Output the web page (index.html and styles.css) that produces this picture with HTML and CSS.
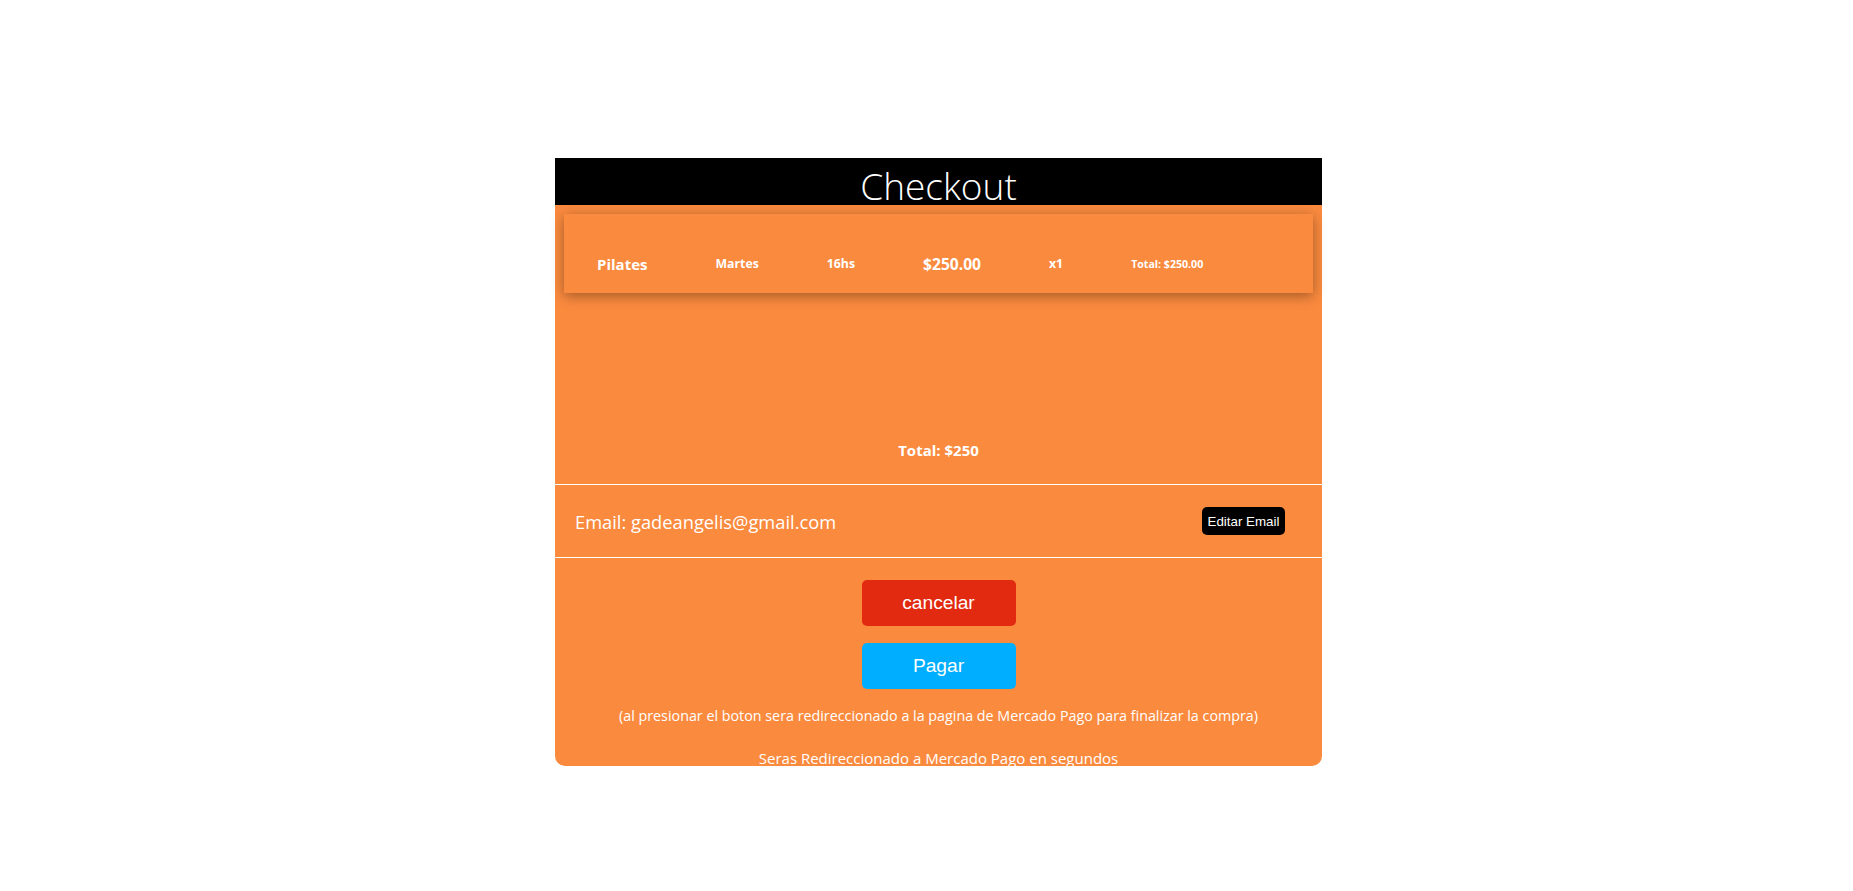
FILE: index.html
```html
<!DOCTYPE html>
<html lang="es">
<head>
<meta charset="utf-8">
<title>Checkout</title>
<link rel="stylesheet" href="styles.css">
</head>
<body>
<div class="page">
  <div class="card">
    <div class="card-header">
      <h1 class="title">Checkout</h1>
    </div>
    <div class="items">
      <div class="item">
        <span class="cell name">Pilates</span>
        <span class="cell sm">Martes</span>
        <span class="cell sm">16hs</span>
        <span class="cell md">$250.00</span>
        <span class="cell sm">x1</span>
        <span class="cell xs">Total: $250.00</span>
      </div>
      <div class="grand-total">Total: $250</div>
    </div>
    <div class="email-row">
      <span class="email">Email: gadeangelis@gmail.com</span>
      <button class="edit-btn">Editar Email</button>
    </div>
    <div class="actions">
      <button class="btn btn-cancel">cancelar</button>
      <button class="btn btn-pay">Pagar</button>
      <p class="note">(al presionar el boton sera redireccionado a la pagina de Mercado Pago para finalizar la compra)</p>
      <p class="note note-last">Seras Redireccionado a Mercado Pago en segundos</p>
    </div>
  </div>
</div>
</body>
</html>
```

FILE: styles.css
```css
html, body {
  margin: 0;
  padding: 0;
  background: #ffffff;
}

body {
  font-family: "Open Sans", "Noto Sans", sans-serif;
  color: #ffffff;
}

.page {
  display: flex;
  justify-content: center;
  padding: 158px 0 0 24px;
}

.card {
  width: 767px;
  height: 608px;
  background: #fa8a3e;
  border-radius: 0 0 10px 10px;
  display: flex;
  flex-direction: column;
}

.card > * {
  flex-shrink: 0;
}

.card-header {
  height: 47px;
  box-sizing: border-box;
  padding-top: 9px;
  background: #000000;
  text-align: center;
}

.title {
  margin: 0;
  font-size: 37px;
  line-height: 1;
  font-weight: 300;
  color: #ffffff;
}

.items {
  height: 279px;
  box-sizing: border-box;
  padding: 9px 9px 0 9px;
  display: flex;
  flex-direction: column;
}

.item {
  height: 79px;
  box-sizing: border-box;
  padding: 20px 0 0 33px;
  display: flex;
  align-items: center;
  gap: 68px;
  background: #fa8a3e;
  box-shadow: 0 3px 12px rgba(0, 0, 0, 0.35);
}

.cell {
  font-weight: 700;
  white-space: nowrap;
}

.name { font-size: 15px; }
.md { font-size: 15.6px; }
.sm { font-size: 12.3px; }
.xs { font-size: 10.6px; }

.grand-total {
  margin-top: 147px;
  line-height: 20px;
  font-size: 15px;
  font-weight: 700;
  text-align: center;
}

.email-row {
  height: 74px;
  box-sizing: border-box;
  border-top: 1px solid #ffffff;
  border-bottom: 1px solid #ffffff;
  display: flex;
  align-items: center;
  justify-content: space-between;
  padding: 0 37px 0 20px;
}

.email {
  font-size: 18.3px;
}

.edit-btn {
  font-family: "Liberation Sans", Arial, sans-serif;
  font-size: 13.33px;
  color: #ffffff;
  background: #000000;
  border: none;
  border-radius: 5px;
  height: 28px;
  width: 83px;
  padding: 0;
}

.actions {
  display: flex;
  flex-direction: column;
  align-items: center;
  padding-top: 22px;
}

.btn {
  width: 154px;
  height: 46px;
  border: none;
  border-radius: 5px;
  font-family: "Liberation Sans", Arial, sans-serif;
  font-size: 19.2px;
  color: #ffffff;
  padding: 0;
}

.btn-cancel {
  background: #e12a10;
  margin-bottom: 17px;
}

.btn-pay {
  background: #00aeff;
}

.note {
  margin: 17px 0 0 0;
  font-size: 14.3px;
  line-height: 20px;
  text-align: center;
}

.note-last {
  margin-top: 22px;
  font-size: 15px;
}
```
